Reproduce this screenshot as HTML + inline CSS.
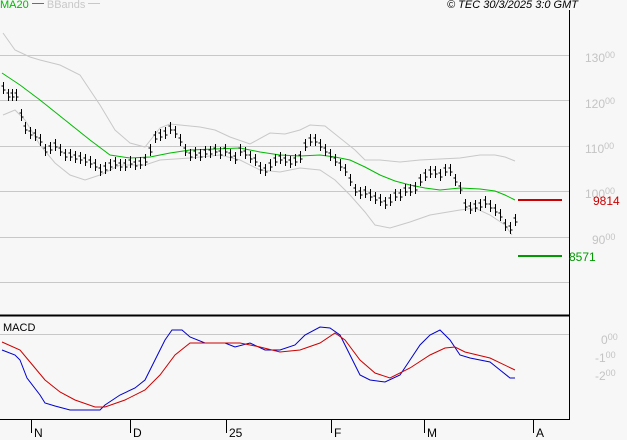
<!DOCTYPE html>
<html><head><meta charset="utf-8"><style>
html,body{margin:0;padding:0;background:#f7f7f7;}
body{width:627px;height:440px;overflow:hidden;position:relative;font-family:"Liberation Sans",sans-serif;}
.t{position:absolute;font-size:12px;white-space:nowrap;}
.g{color:#c4c4c4;}
.g sup{font-size:9px;vertical-align:4px;}
</style></head><body>
<svg width="627" height="440" style="position:absolute;left:0;top:0" id="s">
<g stroke="#c8c8c8" stroke-width="1" fill="none">
<line x1="0" y1="55.5" x2="569" y2="55.5"/>
<line x1="0" y1="100.5" x2="569" y2="100.5"/>
<line x1="0" y1="146.5" x2="569" y2="146.5"/>
<line x1="0" y1="191.5" x2="569" y2="191.5"/>
<line x1="0" y1="237.5" x2="569" y2="237.5"/>
<line x1="0" y1="282.5" x2="569" y2="282.5"/>
<line x1="0" y1="334.5" x2="569" y2="334.5"/>
</g>
<g fill="none" stroke="#c8c8c8" stroke-width="1">
<polyline points="3,33 15,50 30,57 40,60 60,65 80,75 100,105 115,130 130,143 145,147 160,128 170,124 200,127 215,130 230,137 250,144 270,133 285,134 300,130 310,125 325,126 340,138 355,150 365,160 380,160 400,162 420,160 440,159 460,158 480,155 495,155 505,157 515,161"/>
<polyline points="3,115 15,110 25,120 40,145 55,163 70,175 85,180 100,175 120,165 145,165 160,160 190,158 220,155 240,160 260,170 280,172 300,168 320,170 335,180 350,195 365,212 375,225 390,228 410,222 430,215 460,210 475,208 490,215 505,225 512,235"/>
</g>
<polyline fill="none" stroke="#00bb00" stroke-width="1" points="2,73 20,85 40,100 65,120 90,140 110,155 130,158 150,157 170,153 190,150 215,149 240,148 260,152 280,155 300,156 320,155 335,157 350,160 365,167 380,175 395,181 410,185 425,188 440,190 460,188 480,189 495,191 505,195 515,200"/>
<g id="bars" stroke="#000" stroke-width="1" fill="none"></g>
<line x1="518" y1="200" x2="562" y2="200" stroke="#cc0000" stroke-width="2"/>
<line x1="518" y1="256" x2="562" y2="256" stroke="#009900" stroke-width="2"/>
<line x1="569.5" y1="10" x2="569.5" y2="420" stroke="#000" stroke-width="1"/>
<line x1="0" y1="315.5" x2="569" y2="315.5" stroke="#000" stroke-width="2"/>
<line x1="0" y1="419.5" x2="570" y2="419.5" stroke="#000" stroke-width="1"/>
<g stroke="#000" stroke-width="1">
<line x1="31.5" y1="419" x2="31.5" y2="433"/>
<line x1="130.5" y1="419" x2="130.5" y2="433"/>
<line x1="226.5" y1="419" x2="226.5" y2="433"/>
<line x1="331.5" y1="419" x2="331.5" y2="433"/>
<line x1="424.5" y1="419" x2="424.5" y2="433"/>
<line x1="533.5" y1="419" x2="533.5" y2="433"/>
</g>
<polyline fill="none" stroke="#0000cc" stroke-width="1" points="2,350 15,355 20,360 27,378 40,395 45,403 55,406 70,410 85,410 100,410 105,405 120,395 135,388 145,380 155,360 165,340 172,330 182,330 190,337 205,343 225,343 235,347 250,343 265,350 280,350 295,345 305,335 320,327 330,328 340,335 350,355 360,375 370,380 385,382 400,375 410,360 420,345 430,335 440,330 450,340 460,355 470,358 490,362 500,370 510,378 515,378"/>
<polyline fill="none" stroke="#cc0000" stroke-width="1" points="2,342 20,350 30,362 45,380 60,392 75,400 95,407 105,407 125,400 145,390 160,375 175,355 190,343 240,343 260,347 280,352 300,350 320,343 335,333 345,340 360,360 375,373 390,378 410,368 430,355 445,348 455,347 465,352 490,358 515,370"/>
</svg>
<div class="t" style="left:0;top:-1px;color:#00bb00;font-size:11px">MA20 <span style="display:inline-block;width:12px;border-top:1px solid #00bb00;vertical-align:4px"></span> <span style="color:#c8c8c8">BBands <span style="display:inline-block;width:12px;border-top:1px solid #c8c8c8;vertical-align:4px"></span></span></div>
<div class="t" style="left:447px;top:-1px;font-size:11px;font-style:italic">© TEC 30/3/2025 3:0 GMT</div>
<div class="t" style="left:3px;top:322px;font-size:11px">MACD</div>
<div class="t g" style="left:585px;top:50px">130<sup>00</sup></div>
<div class="t g" style="left:585px;top:96px">120<sup>00</sup></div>
<div class="t g" style="left:585px;top:141px">110<sup>00</sup></div>
<div class="t g" style="left:585px;top:186px">100<sup>00</sup></div>
<div class="t g" style="left:592px;top:232px">90<sup>00</sup></div>
<div class="t" style="left:593px;top:194px;color:#cc0000">9814</div>
<div class="t" style="left:569px;top:250px;color:#009900">8571</div>
<div class="t g" style="left:601px;top:332px">0<sup>00</sup></div>
<div class="t g" style="left:595px;top:350px">-1<sup>00</sup></div>
<div class="t g" style="left:595px;top:368px">-2<sup>00</sup></div>
<div class="t" style="left:34px;top:426px">N</div>
<div class="t" style="left:133px;top:426px">D</div>
<div class="t" style="left:229px;top:426px">25</div>
<div class="t" style="left:334px;top:426px">F</div>
<div class="t" style="left:427px;top:426px">M</div>
<div class="t" style="left:536px;top:426px">A</div>
<script>
var d=[[3,88],[8,95],[12,95],[16,95],[21,115],[25,128],[30,133],[35,135],[40,140],[45,150],[50,148],[55,145],[60,150],[65,155],[70,155],[75,157],[80,158],[85,160],[90,162],[95,165],[100,170],[105,168],[110,165],[115,163],[120,165],[125,165],[130,162],[135,164],[140,163],[145,160],[150,150],[155,137],[160,135],[165,133],[170,128],[175,132],[180,140],[185,150],[190,155],[195,153],[200,155],[205,152],[210,152],[215,150],[220,153],[225,150],[230,155],[235,158],[240,150],[245,153],[250,157],[255,160],[260,168],[265,170],[270,165],[275,160],[280,158],[285,160],[290,162],[295,160],[300,157],[305,145],[310,140],[315,140],[320,145],[325,150],[330,155],[335,160],[340,165],[345,170],[350,180],[355,190],[360,193],[365,192],[370,195],[375,198],[380,200],[385,203],[390,200],[395,195],[400,195],[405,190],[410,190],[415,188],[420,180],[425,175],[430,172],[435,172],[440,175],[445,170],[450,170],[455,180],[460,188],[465,205],[470,208],[475,206],[480,205],[485,202],[490,206],[495,210],[500,215],[505,225],[510,228],[515,220]];
var p="";d.forEach(function(b,i){var x=b[0]+.5,y=b[1];p+="M"+x+" "+(y-6)+"V"+(y+6)+"M"+(x-2)+" "+(y-2)+"h2M"+x+" "+(y+2)+"h2";});
var e=document.createElementNS("http://www.w3.org/2000/svg","path");e.setAttribute("d",p);document.getElementById("bars").appendChild(e);
</script>
</body></html>
